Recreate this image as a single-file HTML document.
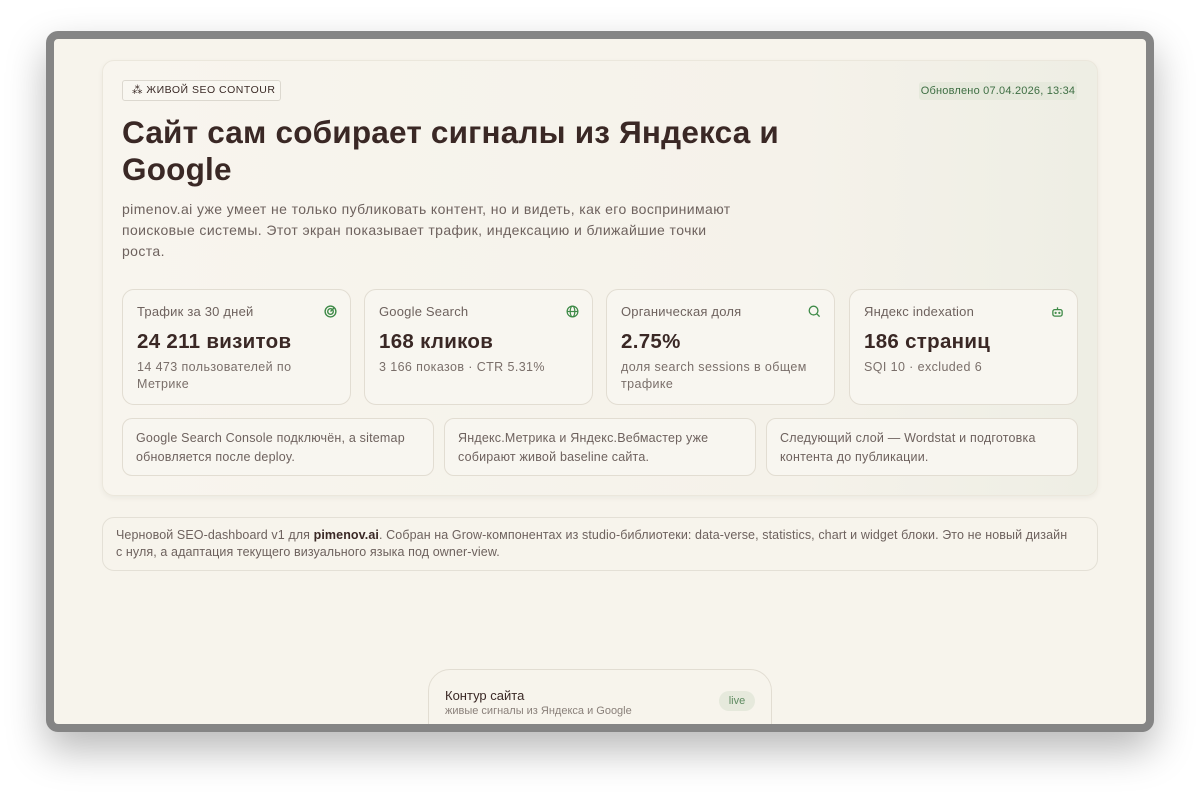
<!DOCTYPE html>
<html><head><meta charset="utf-8"><style>
*{box-sizing:border-box;margin:0;padding:0}
body{width:1200px;height:793px;background:#fff;font-family:"Liberation Sans",sans-serif;position:relative;overflow:hidden;color:#3a2a26}
.frame{position:absolute;left:46px;top:31px;width:1108px;height:701px;border:8px solid #858585;border-radius:12px;background:#f7f4ec;box-shadow:0 18px 40px rgba(0,0,0,.28);overflow:hidden}
.in{position:absolute;left:-54px;top:-39px;width:1200px;height:793px}
.card{position:absolute;left:102px;top:60px;width:996px;height:436px;border:1px solid #ebe7dc;border-radius:12px;background:linear-gradient(90deg,#f8f5ee 0%,#f5f2ea 70%,#eeeee4 100%);box-shadow:0 2px 6px rgba(0,0,0,.05)}
.tag{position:absolute;left:122px;top:80px;width:159px;height:21px;border:1px solid #dcd8cf;border-radius:3px;font-size:10.5px;letter-spacing:.5px;line-height:19px;padding-left:9px;color:#3a2a26;background:#f9f7f1;white-space:nowrap}
.upd{position:absolute;left:919px;top:82px;width:158px;height:18px;background:#e6e9dc;border-radius:3px;color:#3e6e43;font-size:11px;letter-spacing:.2px;line-height:18px;text-align:center}
h1{position:absolute;left:122px;top:114px;font-size:31.5px;line-height:37px;font-weight:bold;color:#3a2825;width:720px;letter-spacing:.2px}
.lead{position:absolute;left:122px;top:199px;width:615px;font-size:14px;line-height:21px;color:#6e625e;letter-spacing:.4px}
.m{position:absolute;top:289px;width:229px;height:116px;border:1px solid #e2ddd2;border-radius:12px;background:#f8f6f0;padding:14px 14px}
.m .l{font-size:13px;color:#6e625e;letter-spacing:.2px}
.m .v{font-size:20.5px;font-weight:bold;margin-top:11px;color:#3a2825;letter-spacing:.3px}
.m .s{font-size:12.5px;line-height:17px;color:#7a6f6a;margin-top:5px;letter-spacing:.4px;width:200px}
.m svg{position:absolute;right:13px;top:15px}
.n{position:absolute;top:418px;width:312px;height:58px;border:1px solid #e2ddd2;border-radius:10px;background:#f8f6f0;padding:10px 13px;font-size:12.5px;line-height:19px;color:#6e625e;letter-spacing:.2px}
.note{position:absolute;left:102px;top:517px;width:996px;height:54px;border:1px solid #e4e0d6;border-radius:12px;padding:9px 13px;font-size:12.5px;line-height:17px;color:#6e625e;letter-spacing:.1px;white-space:nowrap}
.note b{color:#3a2825}
.pill{position:absolute;left:428px;top:669px;width:344px;height:80px;border:1px solid #e2ddd2;border-radius:22px;background:#f7f4ec;padding:18px 16px}
.pill .t{font-size:13px;color:#3a2825}
.pill .u{font-size:11px;color:#8a807a;margin-top:2px}
.live{position:absolute;right:16px;top:21px;width:36px;height:20px;border-radius:10px;background:#e6e9dc;color:#5e8a60;font-size:11px;text-align:center;line-height:20px}
</style></head><body>
<div class="frame"><div class="in">
<div class="card"></div>
<div class="tag">⁂ ЖИВОЙ SEO CONTOUR</div>
<div class="upd">Обновлено 07.04.2026, 13:34</div>
<h1>Сайт сам собирает сигналы из Яндекса и Google</h1>
<div class="lead">pimenov.ai уже умеет не только публиковать контент, но и видеть, как его воспринимают поисковые системы. Этот экран показывает трафик, индексацию и ближайшие точки роста.</div>

<div class="m" style="left:122px"><div class="l">Трафик за 30 дней</div><div class="v">24 211 визитов</div><div class="s" style="width:175px">14 473 пользователей по Метрике</div>
<svg width="13" height="13" viewBox="0 0 14 14" fill="none" stroke="#3e8a47" stroke-width="1.5"><circle cx="7" cy="7" r="5.8"/><circle cx="7" cy="7" r="3"/><path d="M7 7l4-4"/></svg></div>
<div class="m" style="left:364px"><div class="l">Google Search</div><div class="v">168 кликов</div><div class="s">3 166 показов · CTR 5.31%</div>
<svg width="13" height="13" viewBox="0 0 14 14" fill="none" stroke="#3e8a47" stroke-width="1.3"><circle cx="7" cy="7" r="5.8"/><ellipse cx="7" cy="7" rx="2.5" ry="5.8"/><path d="M1.2 7h11.6"/></svg></div>
<div class="m" style="left:606px"><div class="l">Органическая доля</div><div class="v">2.75%</div><div class="s">доля search sessions в общем трафике</div>
<svg width="13" height="13" viewBox="0 0 14 14" fill="none" stroke="#3e8a47" stroke-width="1.4"><circle cx="6" cy="6" r="4.7"/><path d="M9.5 9.5l3 3"/></svg></div>
<div class="m" style="left:849px"><div class="l">Яндекс indexation</div><div class="v">186 страниц</div><div class="s">SQI 10 · excluded 6</div>
<svg width="13" height="13" viewBox="0 0 14 14" fill="none" stroke="#3e8a47" stroke-width="1.4"><rect x="2" y="5" width="10" height="7" rx="2"/><path d="M7 5V2.5"/><circle cx="5" cy="8.5" r=".5"/><circle cx="9" cy="8.5" r=".5"/></svg></div>

<div class="n" style="left:122px">Google Search Console подключён, а sitemap обновляется после deploy.</div>
<div class="n" style="left:444px">Яндекс.Метрика и Яндекс.Вебмастер уже собирают живой baseline сайта.</div>
<div class="n" style="left:766px">Следующий слой — Wordstat и подготовка контента до публикации.</div>

<div class="note">Черновой SEO-dashboard v1 для <b>pimenov.ai</b>. Собран на Grow-компонентах из studio-библиотеки: data-verse, statistics, chart и widget блоки. Это не новый дизайн<br>с нуля, а адаптация текущего визуального языка под owner-view.</div>

<div class="pill"><div class="t">Контур сайта</div><div class="u">живые сигналы из Яндекса и Google</div><div class="live">live</div></div>
</div></div>
</body></html>
